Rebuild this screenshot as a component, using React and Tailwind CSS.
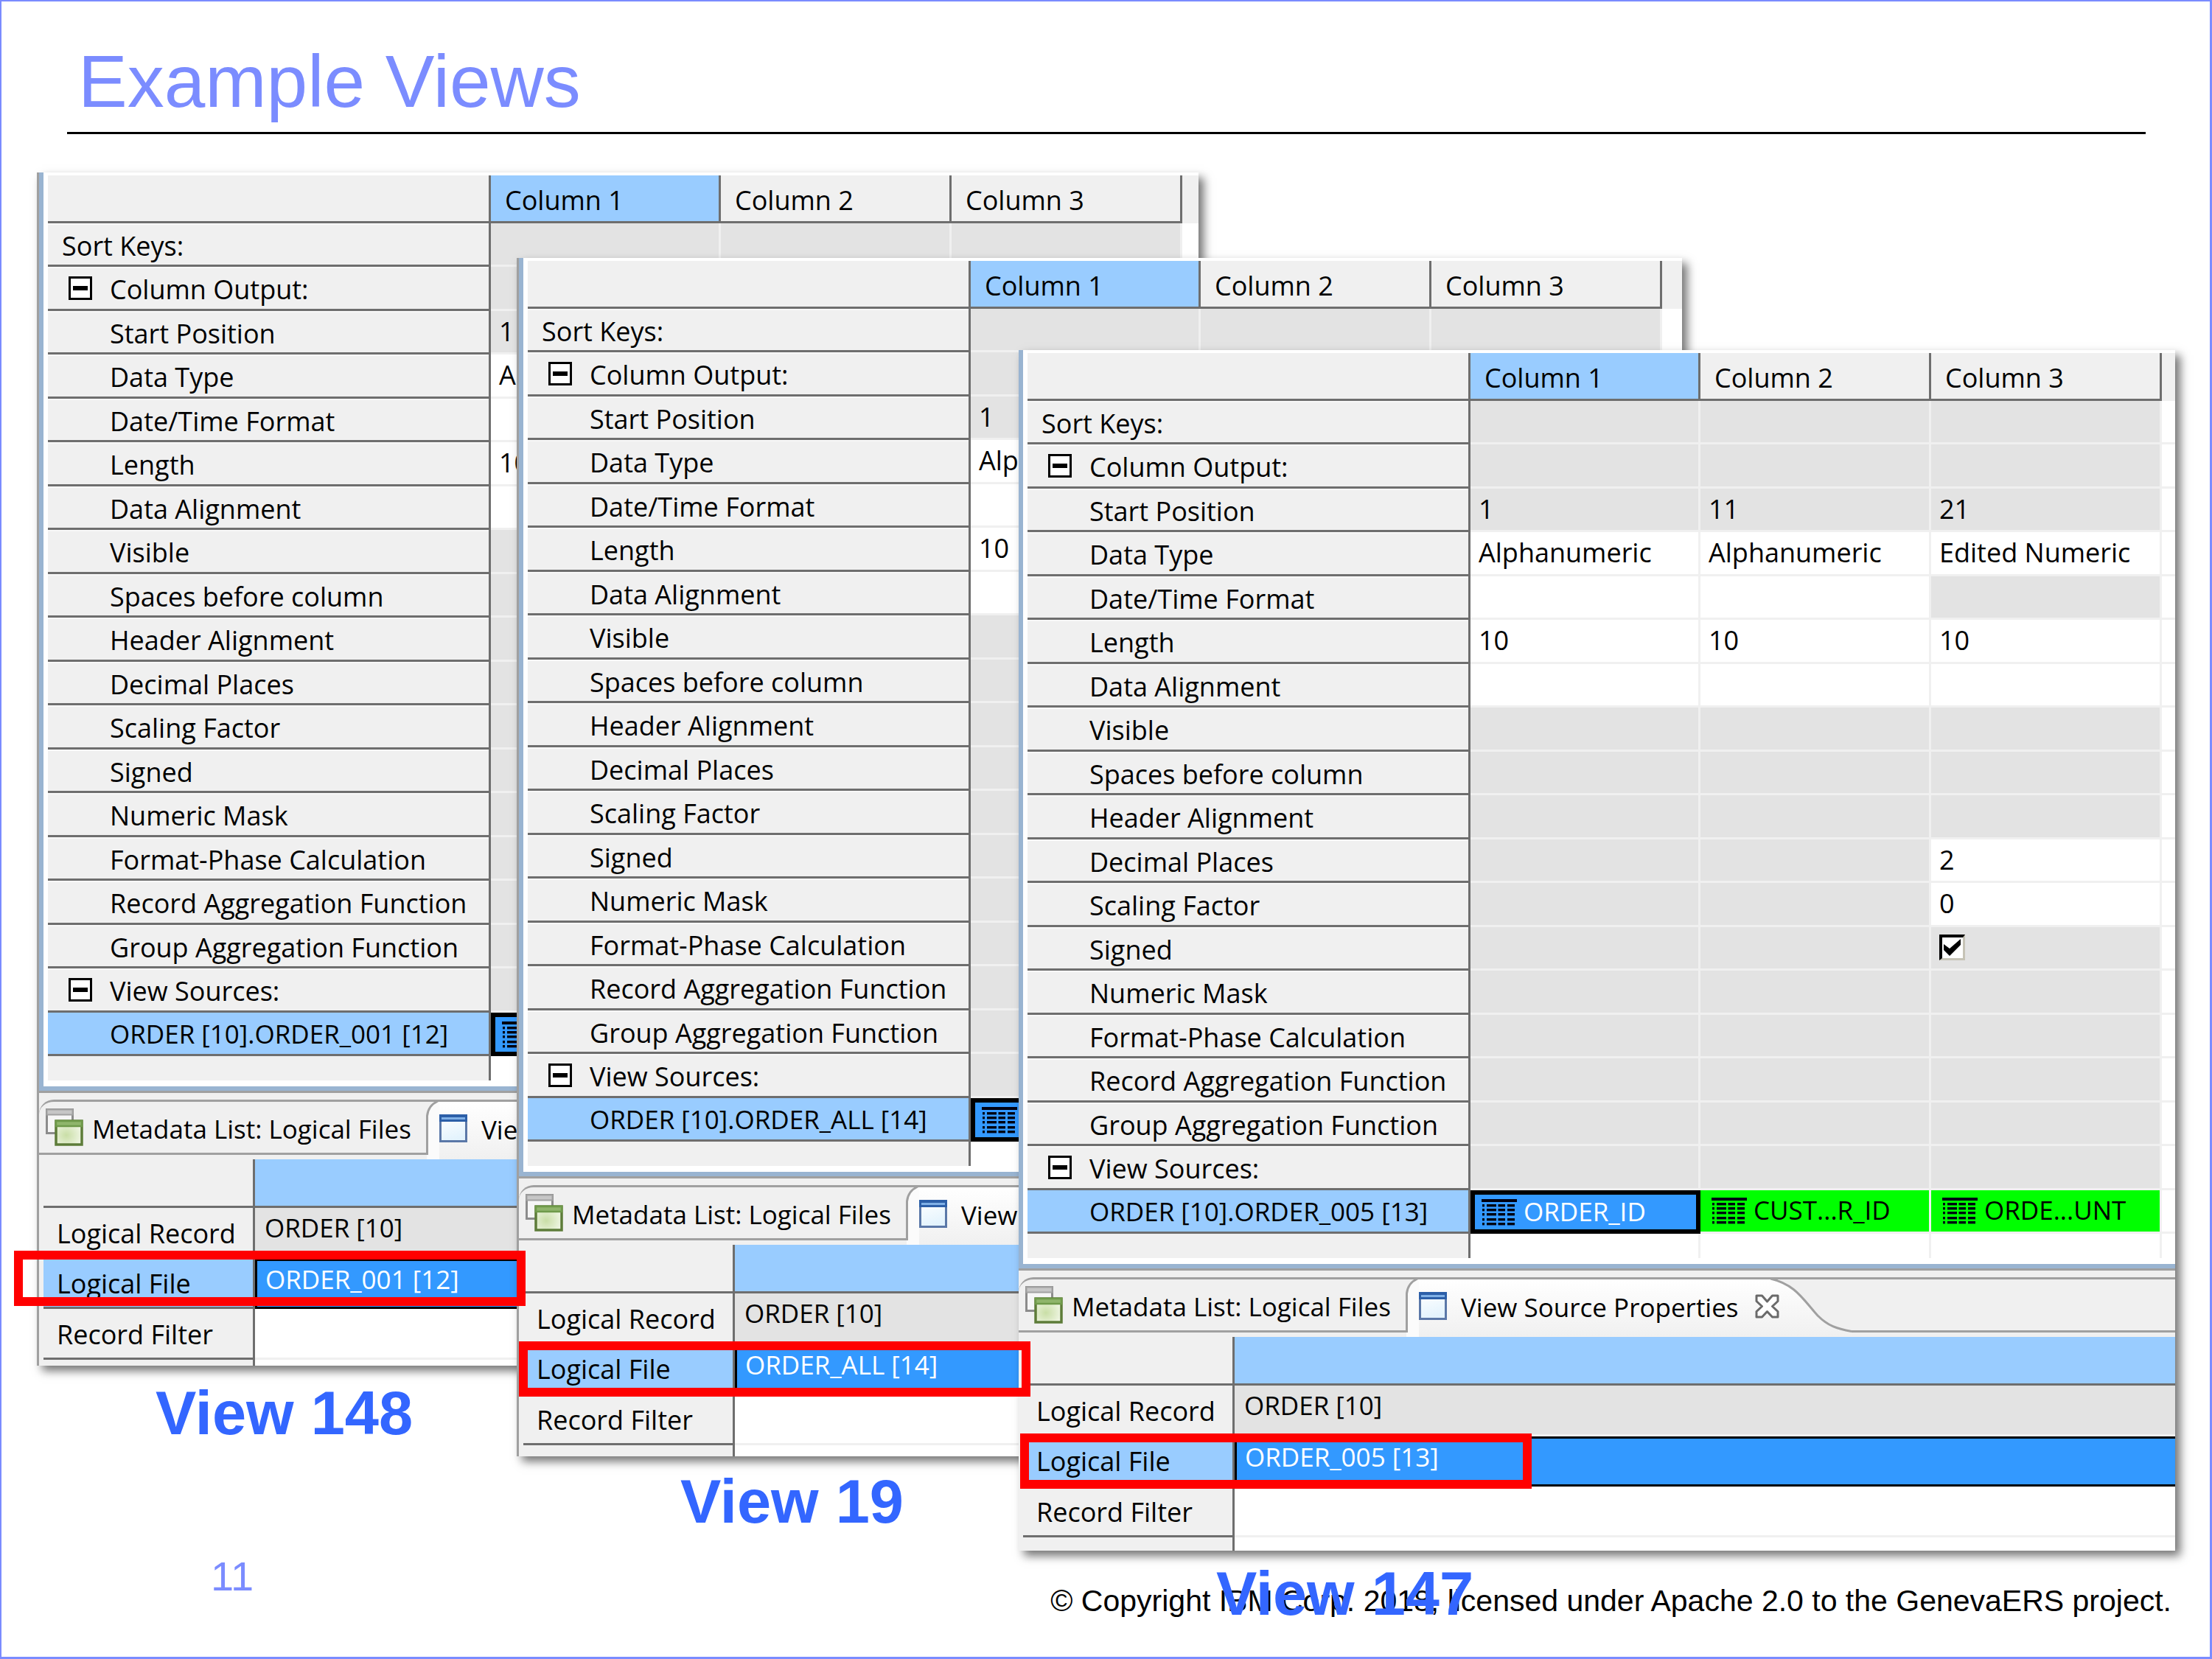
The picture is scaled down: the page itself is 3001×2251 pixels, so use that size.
const PROPERTIES = [
  { label: "Start Position", tone: "gray" },
  { label: "Data Type", tone: "white" },
  { label: "Date/Time Format", tone: "white" },
  { label: "Length", tone: "white" },
  { label: "Data Alignment", tone: "white" },
  { label: "Visible", tone: "gray" },
  { label: "Spaces before column", tone: "gray" },
  { label: "Header Alignment", tone: "gray" },
  { label: "Decimal Places", tone: "gray" },
  { label: "Scaling Factor", tone: "gray" },
  { label: "Signed", tone: "gray" },
  { label: "Numeric Mask", tone: "gray" },
  { label: "Format-Phase Calculation", tone: "gray" },
  { label: "Record Aggregation Function", tone: "gray" },
  { label: "Group Aggregation Function", tone: "gray" },
];

const FIRST_COLUMN = { "Start Position": "1", "Data Type": "Alphanumeric", Length: "10" };

const VIEWS = [
  {
    name: "View 148",
    source: "ORDER_001 [12]",
    columns: [FIRST_COLUMN, {}, {}],
    sources: ["", "", ""],
    figure: "left-[48px] top-[52px] w-[1576px]",
    frame: "border-l-[3px]",
    lastRow: "h-[8px]",
    mark: "left-[-31px] top-[1463px]",
    caption: "mt-[23px] ml-[161px]",
  },
  {
    name: "View 19",
    source: "ORDER_ALL [14]",
    columns: [FIRST_COLUMN, {}, {}],
    sources: ["", "", ""],
    figure: "left-[699px] top-[168px] w-[1581px]",
    frame: "border-l-[3px]",
    lastRow: "h-[15px]",
    mark: "left-[3px] top-[1470px]",
    caption: "mt-[20px] ml-[222px]",
  },
  {
    name: "View 147",
    source: "ORDER_005 [13]",
    columns: [
      FIRST_COLUMN,
      { "Start Position": "11", "Data Type": "Alphanumeric", Length: "10" },
      {
        "Start Position": "21",
        "Data Type": "Edited Numeric",
        Length: "10",
        "Decimal Places": "2",
        "Scaling Factor": "0",
        Signed: true,
      },
    ],
    sources: ["ORDER_ID", "CUST...R_ID", "ORDE...UNT"],
    figure: "left-[1380px] top-[293px] w-[1569px]",
    frame: "",
    lastRow: "h-[18px]",
    mark: "left-[2px] top-[1470px]",
    caption: "mt-[17px] ml-[268px]",
  },
];

const LABEL =
  "border-r-[3px] border-b-[3px] border-[#6e6e6e] p-0 pt-[5px] text-left align-middle font-normal shadow-[inset_0_2px_0_#f8f8f8]";
const CELL = "border-r-[3px] border-b-[3px] border-[#f0f0f0] p-0 pl-[11px] pb-px text-left align-middle";

function FieldIcon() {
  const rows = [7, 13, 19, 26, 32];
  return (
    <svg viewBox="0 0 48 36" className="h-9 w-12 shrink-0" fill="#001" aria-hidden="true">
      <rect x="0" y="0" width="48" height="4" />
      {rows.map((y) => (
        <g key={y}>
          <rect x="1" y={y} width="3" height="3.4" />
          <rect x="7" y={y} width="13" height="3.4" />
          <rect x="22.500" y={y} width="9.500" height="3.4" />
          <rect x="35" y={y} width="10" height="3.4" />
        </g>
      ))}
    </svg>
  );
}

function MetadataIcon() {
  return (
    <svg viewBox="0 0 51 51" className="h-[51px] w-[51px] shrink-0" aria-hidden="true">
      <defs>
        <radialGradient id="pane" cx="0.4" cy="0.6" r="0.8">
          <stop offset="0" stopColor="#c9dea6" />
          <stop offset="1" stopColor="#fbfdf6" />
        </radialGradient>
      </defs>
      <rect x="1.500" y="1.500" width="35" height="32" fill="#f6f6f6" stroke="#8c8c8c" strokeWidth="3" />
      <rect x="1.500" y="1.500" width="35" height="7" fill="#c6c6c6" stroke="#a2a2a2" strokeWidth="2" />
      <rect x="14" y="17" width="35" height="32" fill="url(#pane)" stroke="#5d7c39" strokeWidth="3.500" />
      <rect x="14" y="17" width="35" height="7" fill="#8fb56b" stroke="#6f9a4a" strokeWidth="2.500" />
    </svg>
  );
}

function PropertiesIcon() {
  return (
    <svg viewBox="0 0 38 38" className="h-[38px] w-[38px] shrink-0" aria-hidden="true">
      <defs>
        <linearGradient id="sheet" x1="0" y1="0" x2="0.300" y2="1">
          <stop offset="0" stopColor="#ffffff" />
          <stop offset="1" stopColor="#e3f3fd" />
        </linearGradient>
      </defs>
      <rect x="1.500" y="1.500" width="35" height="35" fill="url(#sheet)" stroke="#5b78a8" strokeWidth="3" />
      <rect x="0" y="0" width="38" height="10" fill="#2c5fa8" />
      <rect x="3" y="4" width="32" height="3" fill="#7fb0e6" />
    </svg>
  );
}

function CloseIcon() {
  return (
    <svg viewBox="0 0 33 33" className="h-[33px] w-[33px]" aria-hidden="true">
      <path
        d="M2 2H9.500L16.500 10L23.500 2H31V9.500L23.500 16.500L31 23.500V31H23.500L16.500 23.500L9.500 31H2V23.500L9.500 16.500L2 9.500Z"
        fill="#fff"
        stroke="#6a6a6a"
        strokeWidth="3"
        strokeLinejoin="round"
      />
    </svg>
  );
}

function Toggle({ label }) {
  return (
    <button
      type="button"
      aria-label={`Collapse ${label}`}
      className="flex h-8 w-8 items-center justify-center border-[3px] border-black bg-white"
    >
      <span className="h-[6px] w-5 bg-black" />
    </button>
  );
}

function GroupRow({ label }) {
  return (
    <tr className="odd:h-[59px] even:h-[60px]">
      <th
        scope="row"
        className="border-r-[3px] border-b-[3px] border-[#6e6e6e] p-0 text-left align-middle font-normal shadow-[inset_0_2px_0_#f8f8f8]"
      >
        <div className="flex items-center gap-[24px] pl-7">
          <Toggle label={label} />
          <span className="pt-[5px]">{label}</span>
        </div>
      </th>
      <td className={`${CELL} bg-[#e3e3e3]`} />
      <td className={`${CELL} bg-[#e3e3e3]`} />
      <td className={`${CELL} bg-[#e3e3e3]`} />
      <td className="border-b-[3px] border-[#f0f0f0] bg-white p-0" />
    </tr>
  );
}

function toneOf(property, values) {
  if (values.Signed && property.label === "Date/Time Format") return "bg-[#e3e3e3]";
  if (values.Signed && /^(Decimal|Scaling)/.test(property.label)) return "bg-white";
  return property.tone === "white" ? "bg-white" : "bg-[#e3e3e3]";
}

function Value({ value, label }) {
  if (value === true) {
    return (
      <span className="relative block h-[35px] w-[35px]">
        <input
          type="checkbox"
          defaultChecked
          aria-label={label}
          className="block h-[35px] w-[35px] appearance-none border-t-4 border-r-[3px] border-b-[3px] border-l-4 border-t-black border-r-[#c6c3b6] border-b-[#c6c3b6] border-l-black bg-white"
        />
        <svg viewBox="0 0 35 35" className="pointer-events-none absolute inset-0" aria-hidden="true">
          <path d="M6 13L14 19L29 6V14L14 29L6 21Z" fill="#000" />
        </svg>
      </span>
    );
  }
  return value ?? null;
}

function ColumnGrid({ view }) {
  return (
    <table className="w-full table-fixed border-separate border-spacing-0">
      <colgroup>
        <col className="w-[601px]" />
        <col className="w-[312px]" />
        <col className="w-[313px]" />
        <col className="w-[313px]" />
        <col />
      </colgroup>
      <thead>
        <tr className="h-[65px]">
          <td className="border-r-[3px] border-b-[3px] border-[#6e6e6e] bg-[#f0f0f0] p-0" />
          {[1, 2, 3].map((n) => (
            <th
              key={n}
              scope="col"
              className={`border-r-[3px] border-b-[3px] border-[#6e6e6e] p-0 pt-[5px] pl-[19px] text-left align-middle font-normal ${n === 1 ? "bg-[#99ccff]" : "bg-[#f0f0f0]"}`}
            >
              Column {n}
            </th>
          ))}
          <td className="bg-[#f0f0f0] p-0" />
        </tr>
      </thead>
      <tbody className="bg-[#f0f0f0]">
        <tr className="odd:h-[59px] even:h-[60px]">
          <th scope="row" className={`${LABEL} pl-[19px]`}>
            Sort Keys:
          </th>
          <td className={`${CELL} bg-[#e3e3e3]`} />
          <td className={`${CELL} bg-[#e3e3e3]`} />
          <td className={`${CELL} bg-[#e3e3e3]`} />
          <td className="border-b-[3px] border-[#f0f0f0] bg-white p-0" />
        </tr>
        <GroupRow label="Column Output:" />
        {PROPERTIES.map((property) => (
          <tr key={property.label} className="odd:h-[59px] even:h-[60px]">
            <th scope="row" className={`${LABEL} pl-[84px] whitespace-nowrap`}>
              {property.label}
            </th>
            {view.columns.map((values, i) => (
              <td key={i} className={`${CELL} ${toneOf(property, values)}`}>
                <Value value={values[property.label]} label={property.label} />
              </td>
            ))}
            <td className="border-b-[3px] border-[#f0f0f0] bg-white p-0" />
          </tr>
        ))}
        <GroupRow label="View Sources:" />
        <tr className="h-[59px] text-[35px]">
          <th
            scope="row"
            className="border-r-[3px] border-b-[3px] border-[#6e6e6e] bg-[#99ccff] p-0 pl-[84px] text-left align-middle font-normal whitespace-nowrap"
          >
            ORDER [10].{view.source}
          </th>
          <td className="border-[6px] border-black bg-[#3399ff] p-0 pl-[9px] align-middle text-white">
            <div className="flex items-center gap-[9px]">
              <FieldIcon />
              <span className="pb-[3px]">{view.sources[0]}</span>
            </div>
          </td>
          {view.sources.slice(1).map((source, i) => (
            <td
              key={i}
              className="border-r-[3px] border-b-[3px] border-[#f0f0f0] bg-[#00ff00] p-0 pl-[15px] align-middle"
            >
              <div className="flex items-center gap-[9px]">
                <FieldIcon />
                <span className="pb-[3px]">{source}</span>
              </div>
            </td>
          ))}
          <td className="border-b-[3px] border-[#f0f0f0] bg-white p-0" />
        </tr>
        <tr className="h-[33px]">
          <td className="border-r-[3px] border-[#6e6e6e] p-0" />
          <td className="border-r-[3px] border-[#f0f0f0] bg-white p-0" />
          <td className="border-r-[3px] border-[#f0f0f0] bg-white p-0" />
          <td className="border-r-[3px] border-[#f0f0f0] bg-white p-0" />
          <td className="bg-white p-0" />
        </tr>
      </tbody>
    </table>
  );
}

function TabBar() {
  return (
    <div className="flex h-[81px] bg-[#f0f0f0] text-[35px]" role="tablist">
      <button
        type="button"
        role="tab"
        aria-selected="false"
        className="flex h-[75px] w-[525px] shrink-0 items-center gap-3 rounded-tl-[20px] border-t-[3px] border-b-[3px] border-[#a0a0a0] pl-[9px] whitespace-nowrap"
      >
        <MetadataIcon />
        <span className="pt-[3px]">Metadata List: Logical Files</span>
      </button>
      <svg viewBox="0 0 18 81" className="h-[81px] w-[18px] shrink-0" aria-hidden="true">
        <path d="M1 81V20Q4 8 18 2V81Z" fill="#fbfbfb" />
        <path d="M0 1.500H18" stroke="#a0a0a0" strokeWidth="3" />
        <path d="M1.500 75V22Q3 8 16 2" fill="none" stroke="#a0a0a0" strokeWidth="3" />
      </svg>
      <div className="flex h-[81px] shrink-0 items-center border-t-[3px] border-[#a0a0a0] bg-linear-to-b from-white to-[#f0f0f0] pb-[6px]">
        <button
          type="button"
          role="tab"
          aria-selected="true"
          className="flex items-center gap-[19px] whitespace-nowrap"
        >
          <PropertiesIcon />
          <span className="pt-[3px]">View Source Properties</span>
        </button>
        <button type="button" aria-label="Close" className="relative z-10 ml-[22px]">
          <CloseIcon />
        </button>
      </div>
      <svg viewBox="0 0 110 81" className="-ml-3 h-[81px] w-[110px] shrink-0" aria-hidden="true">
        <defs>
          <linearGradient id="fade" x1="0" y1="0" x2="0" y2="1">
            <stop offset="0" stopColor="#ffffff" />
            <stop offset="1" stopColor="#f0f0f0" />
          </linearGradient>
        </defs>
        <path d="M0 2C34 10 44 30 64 52C78 66 90 70 110 74V81H0Z" fill="url(#fade)" />
        <path d="M0 1.500H110" stroke="#a0a0a0" strokeWidth="3" />
        <path d="M0 2C34 10 44 30 64 52C78 66 90 70 110 73.500" fill="none" stroke="#a0a0a0" strokeWidth="3" />
      </svg>
      <div className="h-[75px] flex-1 border-t-[3px] border-b-[3px] border-[#a0a0a0]" />
    </div>
  );
}

function SourceProperties({ view }) {
  const label =
    "border-r-[3px] border-b-[3px] border-[#6e6e6e] p-0 pt-[3px] pl-[18px] text-left align-middle font-normal";
  return (
    <table className="w-full table-fixed border-separate border-spacing-0">
      <colgroup>
        <col className="w-[287px]" />
        <col />
      </colgroup>
      <tbody>
        <tr className="h-[66px]">
          <td className="border-r-[3px] border-b-[3px] border-[#6e6e6e] p-0" />
          <td className="border-b-[3px] border-[#6e6e6e] bg-[#99ccff] p-0" />
        </tr>
        <tr className="h-[69px]">
          <th scope="row" className={label}>
            Logical Record
          </th>
          <td className="border-b-[3px] border-[#f0f0f0] bg-[#e3e3e3] p-0 pb-[13px] pl-[13px] align-middle text-[35px]">
            ORDER [10]
          </td>
        </tr>
        <tr className="h-[68px]">
          <th scope="row" className={`${label} bg-[#99ccff]`}>
            Logical File
          </th>
          <td className="border-y-[3px] border-l-[3px] border-black bg-[#3399ff] p-0 pb-[13px] pl-[11px] align-middle text-[35px] text-white">
            {view.source}
          </td>
        </tr>
        <tr className="h-[69px]">
          <th scope="row" className={label}>
            Record Filter
          </th>
          <td className="border-b-[3px] border-[#f0f0f0] bg-white p-0" />
        </tr>
        <tr className={view.lastRow}>
          <td className="border-r-[3px] border-[#6e6e6e] p-0" />
          <td className="bg-white p-0" />
        </tr>
      </tbody>
    </table>
  );
}

function ViewFigure({ view }) {
  return (
    <figure className={`absolute ${view.figure}`}>
      <div
        className={`isolate border-[#a0a0a0] bg-[#f0f0f0] font-['Open_Sans',sans-serif] text-[36px] leading-none text-black shadow-[7px_7px_12px_rgba(0,0,0,0.55)] ${view.frame}`}
      >
        <div className="border-b-[3px] border-[#a0a0a0]">
          <div className="border-b-[6px] border-l-[6px] border-[#99b4d1] bg-white pt-1 pb-2 pl-[6px]">
            <ColumnGrid view={view} />
          </div>
        </div>
        <div className="pt-[9px]">
          <TabBar />
        </div>
        <div className="pl-[6px]">
          <SourceProperties view={view} />
        </div>
      </div>
      <div className={`absolute z-10 h-[75px] w-[694px] border-[12px] border-[#ff0000] ${view.mark}`} />
      <figcaption className={`text-[83px] leading-none font-bold whitespace-nowrap text-[#3366ff] ${view.caption}`}>
        {view.name}
      </figcaption>
    </figure>
  );
}

export default function App() {
  return (
    <div className="flex min-h-screen w-full flex-col overflow-hidden border-t-2 border-r-[3px] border-b-[3px] border-l-2 border-[#7b8cff] bg-white font-['Liberation_Sans',Arial,sans-serif]">
      <header className="mr-[87px] ml-[89px] border-b-[3px] border-black pt-[58px] pb-[19px] pl-[15px]">
        <h1 className="text-[100px] leading-none text-[#7b8cff]">Example Views</h1>
      </header>
      <main className="relative z-10 flex-1">
        {VIEWS.map((view) => (
          <ViewFigure key={view.name} view={view} />
        ))}
      </main>
      <footer className="flex items-end justify-between pr-[52px] pb-[55px] pl-[284px] leading-none">
        <span className="pb-[26px] text-[56px] text-[#7b8cff]">11</span>
        <p className="text-[41px] text-black">
          © Copyright IBM Corp. 2018, licensed under Apache 2.0 to the GenevaERS project.
        </p>
      </footer>
    </div>
  );
}
